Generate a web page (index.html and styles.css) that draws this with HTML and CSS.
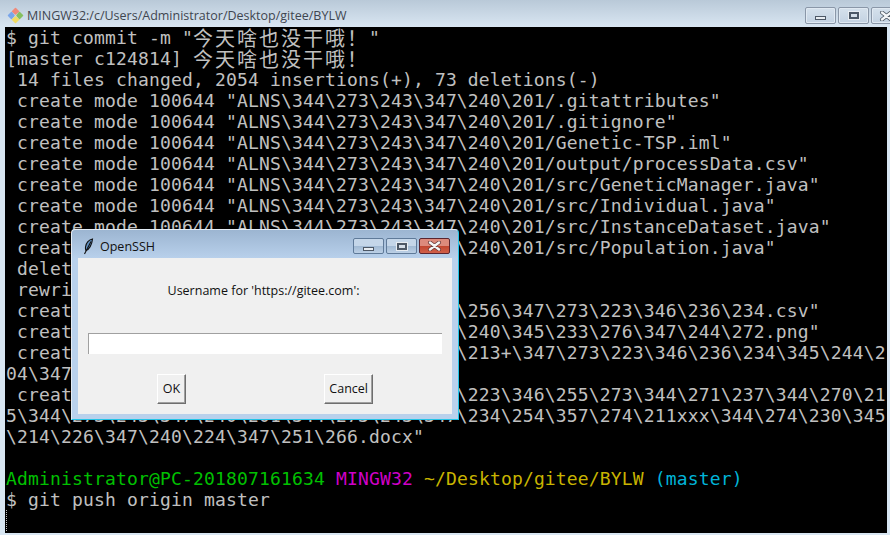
FILE: index.html
```html
<!DOCTYPE html>
<html lang="zh">
<head>
<meta charset="utf-8">
<title>MINGW32</title>
<link rel="stylesheet" href="styles.css">
</head>
<body>
<div class="window">
  <header class="titlebar">
    <svg class="app-icon" width="17" height="17" viewBox="0 0 17 17">
      <path d="M8.5 1.500L11.500 4.500 8.500 7 5.500 4.500z" fill="#f08a7a" stroke="#f08a7a" stroke-width="1.500" stroke-linejoin="round"/>
      <path d="M4.500 5.500L7 8.500 4.500 11.500 1.500 8.500z" fill="#7aa6ea" stroke="#7aa6ea" stroke-width="1.500" stroke-linejoin="round"/>
      <path d="M12.500 5.500L15.500 8.500 12.500 11.500 10 8.500z" fill="#86c060" stroke="#86c060" stroke-width="1.500" stroke-linejoin="round"/>
      <path d="M8.500 10L11.500 12.500 8.500 15.500 5.500 12.500z" fill="#f2dc62" stroke="#f2dc62" stroke-width="1.500" stroke-linejoin="round"/>
    </svg>
    <span class="title-text">MINGW32:/c/Users/Administrator/Desktop/gitee/BYLW</span>
    <div class="caption-buttons">
      <span class="cap-btn"><i class="glyph-min"></i></span>
      <span class="cap-btn"><i class="glyph-max"></i></span>
      <span class="cap-btn">
        <svg class="glyph-x" width="15" height="10" viewBox="0 0 15 10"><path d="M3 1.500L12 8.500M12 1.500L3 8.500" stroke="#4a5560" stroke-width="4" stroke-linecap="round"/><path d="M3 1.500L12 8.500M12 1.500L3 8.500" stroke="#f4f6f8" stroke-width="2.400" stroke-linecap="round"/></svg>
      </span>
    </div>
  </header>
  <pre class="terminal">$ git commit -m "<span class="cjk">今天啥也没干哦！</span>"
[master c124814] <span class="cjk">今天啥也没干哦！</span>
 14 files changed, 2054 insertions(+), 73 deletions(-)
 create mode 100644 "ALNS\344\273\243\347\240\201/.gitattributes"
 create mode 100644 "ALNS\344\273\243\347\240\201/.gitignore"
 create mode 100644 "ALNS\344\273\243\347\240\201/Genetic-TSP.iml"
 create mode 100644 "ALNS\344\273\243\347\240\201/output/processData.csv"
 create mode 100644 "ALNS\344\273\243\347\240\201/src/GeneticManager.java"
 create mode 100644 "ALNS\344\273\243\347\240\201/src/Individual.java"
 create mode 100644 "ALNS\344\273\243\347\240\201/src/InstanceDataset.java"
 create mode 100644 "ALNS\344\273\243\347\240\201/src/Population.java"
 delete mode 100644 "ALNS/.idea"
 rewrite "ALNS/in.txt" (100%)
 create mode 100644 "\344\273\243\347\240\256\347\273\223\346\236\234.csv"
 create mode 100644 "\344\273\243\347\240\240\345\233\276\347\244\272.png"
 create mode 100644 "\344\273\243\347\240\213+\347\273\223\346\236\234\345\244\2
04\347\273\223"
 create mode 100644 "\344\273\243\347\240\223\346\255\273\344\271\237\344\270\21
5\344\273\243\347\240\201\344\273\243\347\234\254\357\274\211xxx\344\274\230\345
\214\226\347\240\224\347\251\266.docx"

<span class="c-green">Administrator@PC-201807161634</span> <span class="c-magenta">MINGW32</span> <span class="c-yellow">~/Desktop/gitee/BYLW</span> <span class="c-cyan">(master)</span>
$ git push origin master
<span class="cursor"></span></pre>
</div>

<section class="dialog">
  <header class="dialog-title">
    <svg class="feather" width="11" height="17" viewBox="0 0 11 17">
      <path d="M9.500 1C6 1.500 3 5 2.500 9 2.300 10.800 2.500 12 3 12.500 6 11.500 9 7 9.500 1z" fill="#5f8fc0" stroke="#111" stroke-width="1.100"/>
      <path d="M8 3.500L1.500 16" fill="none" stroke="#111" stroke-width="1.100"/>
    </svg>
    <span class="dialog-name">OpenSSH</span>
    <div class="dialog-buttons">
      <span class="dlg-btn"><i class="glyph-min"></i></span>
      <span class="dlg-btn"><i class="glyph-max"></i></span>
      <span class="dlg-btn dlg-close">
        <svg class="glyph-x" width="15" height="10" viewBox="0 0 15 10"><path d="M3 1.500L12 8.500M12 1.500L3 8.500" stroke="#6a3a3a" stroke-width="4" stroke-linecap="round"/><path d="M3 1.500L12 8.500M12 1.500L3 8.500" stroke="#f6f6f6" stroke-width="2.400" stroke-linecap="round"/></svg>
      </span>
    </div>
  </header>
  <div class="dialog-body">
    <p class="prompt">Username for 'https://gitee.com':</p>
    <input class="field" type="text" aria-label="Username">
    <div class="actions">
      <button class="btn" type="button">OK</button>
      <button class="btn" type="button">Cancel</button>
    </div>
  </div>
</section>
</body>
</html>
```

FILE: styles.css
```css
html, body {
  margin: 0;
  padding: 0;
  width: 890px;
  height: 535px;
  overflow: hidden;
  background: #d8e6f2;
}
.window {
  display: flex;
  flex-direction: column;
  height: 535px;
}
.titlebar {
  height: 27px;
  flex: none;
  display: flex;
  align-items: center;
  padding: 0 0 0 7px;
  background: linear-gradient(#b9c9d8, #d9e6f2);
  overflow: hidden;
}
.app-icon { flex: none; margin-top: 3px; }
.title-text {
  margin-left: 3px;
  margin-top: 3px;
  font: 12.5px "Open Sans", sans-serif;
  color: #3f4650;
}
.caption-buttons {
  margin-left: auto;
  display: flex;
  gap: 2px;
  margin-top: 4px;
  margin-right: -12px;
  flex: none;
}
.cap-btn {
  width: 29px;
  height: 15px;
  border: 1px solid #8a97a8;
  border-radius: 2px;
  background: linear-gradient(#d5e1ec, #c3d2e2);
  box-shadow: inset 0 0 0 1px #e0e9f2;
  display: flex;
  align-items: center;
  justify-content: center;
}
.glyph-min {
  display: block;
  width: 9px;
  height: 2px;
  margin-top: 5px;
  background: #e8edf2;
  border: 1px solid #4d5866;
}
.glyph-max {
  display: block;
  width: 6px;
  height: 3px;
  background: #d5dee8;
  border: 2px solid #4d5866;
  box-shadow: 0 0 0 1px #e8edf2;
}
.glyph-x { display: block; flex: none; }
.terminal {
  flex: none;
  margin: 0 3px 2px 5px;
  height: 506px;
  padding: 0 0 0 1px;
  box-sizing: border-box;
  background: #000;
  color: #c0c0c0;
  font: 18px/21px "DejaVu Sans Mono", "Noto Sans CJK SC", monospace;
  letter-spacing: 0.16px;
  white-space: pre;
  overflow: hidden;
}
.cjk {
  font-size: 20px;
  line-height: 0;
  letter-spacing: 2px;
  vertical-align: -2px;
}
.cursor {
  display: inline-block;
  height: 21px;
  width: 0;
  vertical-align: top;
  border-left: 1px dotted #c0c0c0;
}
.c-green { color: #00c000; }
.c-magenta { color: #d000c8; }
.c-yellow { color: #c8b400; }
.c-cyan { color: #00b4d8; }

.dialog {
  position: absolute;
  left: 71px;
  top: 229px;
  width: 388px;
  height: 191px;
  box-sizing: border-box;
  display: flex;
  flex-direction: column;
  padding: 0 6px 5px;
  background: linear-gradient(#9cb5d1 0, #b9d1ec 29px, #b9d1ec 100%);
  border: 1px solid #e4edf6;
  border-bottom: 1px solid #23c4e6;
  border-right: 1px solid #23c4e6;
  border-radius: 4px 4px 0 0;
}
.dialog-title {
  height: 28px;
  box-sizing: border-box;
  padding-top: 4px;
  flex: none;
  display: flex;
  align-items: center;
}
.feather { flex: none; margin-left: 5px; }
.dialog-name {
  margin-left: 6px;
  font: 12.5px "Open Sans", sans-serif;
  color: #111;
}
.dialog-buttons {
  margin-left: auto;
  display: flex;
  gap: 2px;
  margin-right: 2px;
}
.dlg-btn {
  width: 29px;
  height: 14px;
  border: 1px solid #5f7a99;
  border-radius: 2px;
  background: linear-gradient(#c4d6e9 50%, #a0b9d3 50%, #bcd0e6);
  display: flex;
  align-items: center;
  justify-content: center;
}
.dlg-close {
  width: 29px;
  border-color: #5a2530;
  background: linear-gradient(#dd8a7c 50%, #c2452f 50%, #d0604a);
}
.dialog-body {
  flex: 1;
  display: flex;
  flex-direction: column;
  background: #f0f0f0;
  padding: 0 10px;
}
.prompt {
  margin: 24px 0 0;
  padding-right: 3px;
  height: 17px;
  text-align: center;
  font: 12.5px/17px "Open Sans", sans-serif;
  color: #111;
}
.field {
  display: block;
  box-sizing: border-box;
  width: 354px;
  height: 21px;
  margin: 34px 0 0;
  padding: 0;
  background: #fff;
  border: 0;
  border-top: 1px solid #a0a0a0;
  border-left: 1px solid #a0a0a0;
  outline: 0;
}
.actions {
  display: flex;
  justify-content: space-between;
  margin: 20px 69px 0;
}
.btn {
  box-sizing: border-box;
  min-width: 29px;
  height: 30px;
  padding: 0 4px 2px;
  background: #f0f0f0;
  border: 1px solid;
  border-color: #fff #6e6e6e #6e6e6e #fff;
  box-shadow: inset -1px -1px 0 #a0a0a0;
  font: 12.5px "Open Sans", sans-serif;
  color: #111;
}
```
